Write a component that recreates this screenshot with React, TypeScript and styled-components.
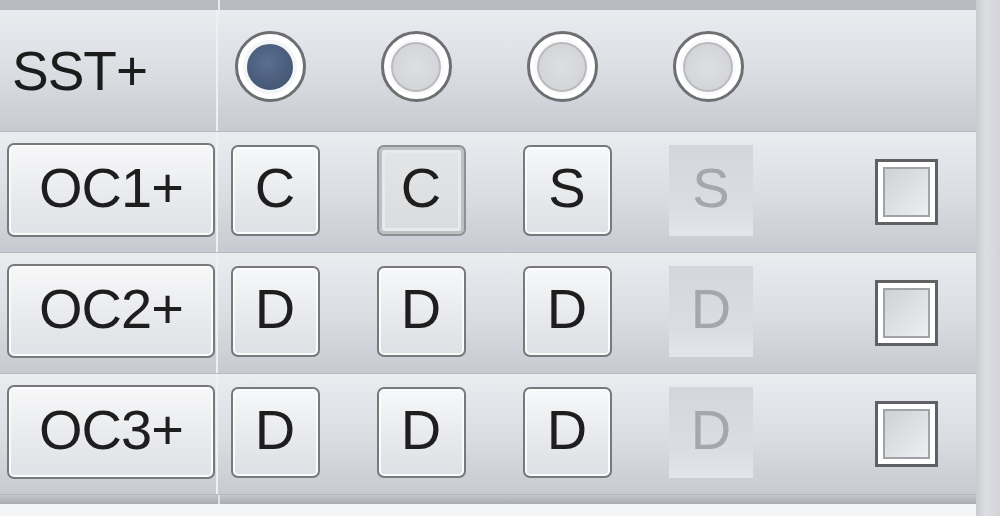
import React from "react";
import styled, { createGlobalStyle, css } from "styled-components";

const GlobalStyle = createGlobalStyle`
  html, body {
    margin: 0;
    padding: 0;
    background: #f3f4f6;
    font-family: "Liberation Sans", Arial, sans-serif;
  }
`;

const Screen = styled.div`
  display: flex;
  width: 1000px;
  height: 516px;
  overflow: hidden;
`;

const Panel = styled.div`
  width: 976px;
  display: flex;
  flex-direction: column;
`;

const RightStrip = styled.div`
  flex: 1;
  background: linear-gradient(to right, #c9cbcf, #dcdee1 40%, #d2d4d8);
`;

const TopStrip = styled.div`
  height: 10px;
  display: flex;
  background: #b7bbc1;
  & > .labelPart {
    width: 218px;
    border-right: 2px solid #e8eaed;
  }
`;

const BottomBand = styled.div`
  height: 9px;
  display: flex;
  background: linear-gradient(#c3c6cb, #a9adb3);
  & > .labelPart {
    width: 218px;
    border-right: 2px solid #dfe1e4;
  }
`;

const Blank = styled.div`
  flex: 1;
  background: #f4f5f7;
`;

const Row = styled.div<{ tall?: boolean }>`
  height: ${({ tall }) => (tall ? 122 : 121)}px;
  display: flex;
  background: linear-gradient(#eaecf0, #d9dce1 55%, #c7cad0);
  border-bottom: 1px solid #b6b9be;
  box-sizing: border-box;
`;

const LabelCell = styled.div`
  width: 218px;
  border-right: 2px solid #eef0f2;
  display: flex;
  align-items: center;
  padding-left: 7px;
  box-sizing: border-box;
`;

const RowTitle = styled.span`
  font-size: 55px;
  color: #1c1c1c;
  margin-left: 5px;
  margin-bottom: 0;
  letter-spacing: -1px;
`;

const Cells = styled.div`
  flex: 1;
  display: grid;
  grid-template-columns: repeat(4, 100px) 1fr;
  column-gap: 46px;
  align-items: center;
  justify-items: center;
`;

const faceStyle = css`
  font-family: "Liberation Sans", Arial, sans-serif;
  font-size: 56px;
  color: #1e1e1e;
  height: 91px;
  box-sizing: border-box;
  border-radius: 7px;
  display: flex;
  align-items: center;
  justify-content: center;
  padding: 0 0 6px;
  margin-bottom: 4px;
`;

const LabelButton = styled.div`
  ${faceStyle};
  width: 208px;
  height: 94px;
  border: 2px solid #77797d;
  background: linear-gradient(#f8f8f9, #e7e9ec 60%, #dfe2e6);
  box-shadow: inset 0 0 0 2px #fbfbfc;
  letter-spacing: -1px;
`;

type Look = "normal" | "pressed" | "disabled";

const KeyButton = styled.div<{ look: Look }>`
  ${faceStyle};
  width: 89px;
  margin-left: 14px;
  ${({ look }) =>
    look === "normal"
      ? css`
          border: 2px solid #77797d;
          background: linear-gradient(#f7f8f9, #e6e8eb 60%, #dde0e4);
          box-shadow: inset 0 0 0 2px #fbfbfc;
        `
      : look === "pressed"
      ? css`
          border: 2px solid #8e9094;
          background: linear-gradient(#e4e5e7, #dadbdd);
          box-shadow: inset 0 0 0 3px #bdbfc2, inset 0 0 0 6px #e8e9eb;
        `
      : css`
          width: 84px;
          margin-left: 10px;
          border-radius: 0;
          background: linear-gradient(#d3d6db, #dadde2 70%, #e2e5e9);
          color: #a4a7ac;
        `}
`;

const RadioOuter = styled.div`
  width: 71px;
  height: 71px;
  margin: 0 0 8px 4px;
  border-radius: 50%;
  box-sizing: border-box;
  border: 3px solid #6d6f73;
  background: #ffffff;
  display: flex;
  align-items: center;
  justify-content: center;
`;

const RadioDot = styled.div<{ checked: boolean }>`
  width: 50px;
  height: 50px;
  border-radius: 50%;
  box-sizing: border-box;
  ${({ checked }) =>
    checked
      ? css`
          border: 4px solid #f4f5f7;
          background: radial-gradient(circle at 45% 40%, #5b6f8f, #3d4f6c);
          width: 54px;
          height: 54px;
        `
      : css`
          border: 2px solid #b9bbbf;
          background: radial-gradient(circle, #dedfe2, #cfd1d4);
          box-shadow: 0 0 0 3px #fafafa;
        `}
`;

const CheckBox = styled.div`
  justify-self: start;
  margin-left: 73px;
  width: 63px;
  height: 66px;
  box-sizing: border-box;
  border: 3px solid #5f6165;
  background: #ffffff;
  padding: 5px;
  & > div {
    width: 100%;
    height: 100%;
    box-sizing: border-box;
    border: 2px solid #9fa2a6;
    background: linear-gradient(135deg, #cfd1d5, #eceef0);
  }
`;

const optionRows: { title: string; keys: [string, Look][] }[] = [
  {
    title: "OC1+",
    keys: [
      ["C", "normal"],
      ["C", "pressed"],
      ["S", "normal"],
      ["S", "disabled"],
    ],
  },
  {
    title: "OC2+",
    keys: [
      ["D", "normal"],
      ["D", "normal"],
      ["D", "normal"],
      ["D", "disabled"],
    ],
  },
  {
    title: "OC3+",
    keys: [
      ["D", "normal"],
      ["D", "normal"],
      ["D", "normal"],
      ["D", "disabled"],
    ],
  },
];

export default function App() {
  return (
    <>
      <GlobalStyle />
      <Screen>
        <Panel>
          <TopStrip>
            <div className="labelPart" />
          </TopStrip>
          <Row tall>
            <LabelCell>
              <RowTitle>SST+</RowTitle>
            </LabelCell>
            <Cells>
              {[true, false, false, false].map((checked, i) => (
                <RadioOuter key={i}>
                  <RadioDot checked={checked} />
                </RadioOuter>
              ))}
            </Cells>
          </Row>
          {optionRows.map((row) => (
            <Row key={row.title}>
              <LabelCell>
                <LabelButton>{row.title}</LabelButton>
              </LabelCell>
              <Cells>
                {row.keys.map(([label, look], i) => (
                  <KeyButton key={i} look={look}>
                    {label}
                  </KeyButton>
                ))}
                <CheckBox>
                  <div />
                </CheckBox>
              </Cells>
            </Row>
          ))}
          <BottomBand>
            <div className="labelPart" />
          </BottomBand>
          <Blank />
        </Panel>
        <RightStrip />
      </Screen>
    </>
  );
}
